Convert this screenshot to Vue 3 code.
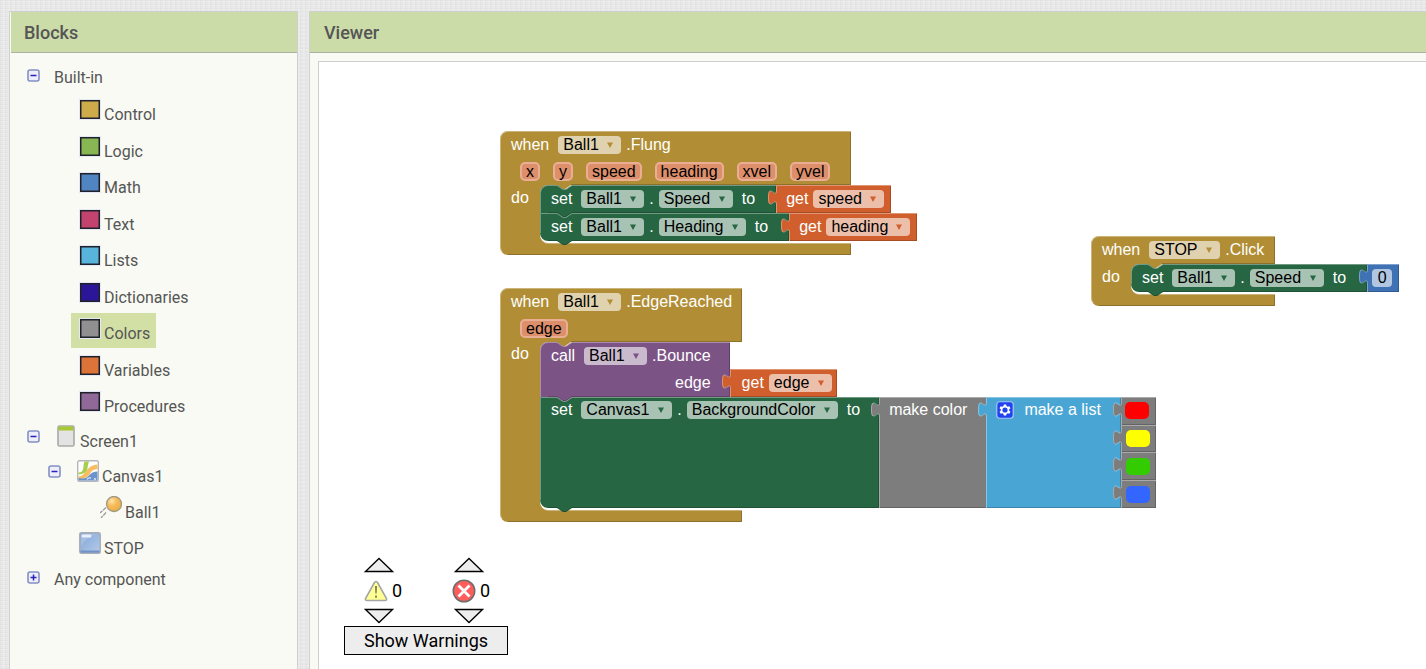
<script setup>
const BROWN = '#b18e35'
const GREEN = '#266643'
const ORANGE = '#d05f2d'
const PURPLE = '#7c5385'
const GRAY = '#7d7d7d'
const SKY = '#49a6d4'
const BLUE = '#3f71b5'

const drawers = [
  { name: 'Control', color: '#cdab4a' },
  { name: 'Logic', color: '#88b653' },
  { name: 'Math', color: '#5085c1' },
  { name: 'Text', color: '#c3436f' },
  { name: 'Lists', color: '#59b4dc' },
  { name: 'Dictionaries', color: '#2b1699' },
  { name: 'Colors', color: '#909090', selected: true },
  { name: 'Variables', color: '#dc743a' },
  { name: 'Procedures', color: '#906998' },
]

const NOTCH = 'l6,4 3,0 6,-4'
const NOTCH_BACK = 'l-6,4 -3,0 -6,-4'

/* Event block: a hat with a "do" mouth that is `inner` pixels tall. */
function hat(w, head, inner) {
  const mouth = head + inner
  const h = mouth + 12
  return {
    fill: BROWN,
    d: `M0,8 A8,8 0 0 1 8,0 H${w} V${head} H71 ${NOTCH_BACK} H48 a8,8 0 0 0 -8,8 V${mouth - 8} a8,8 0 0 0 8,8 H${w} V${h} H8 a8,8 0 0 1 -8,-8 Z`,
    light: `M2.5,${h - 3} Q.5,${h - 5} .5,${h - 8} V8 A7.5,7.5 0 0 1 8,.5 H${w} M42,${mouth - 3} Q44,${mouth + 0.5} 48,${mouth + 0.5} H${w}`,
    dark: `M8,${h - 0.5} H${w - 0.5} V${mouth + 1} M${w - 0.5},1 V${head - 0.5} H71`,
  }
}

/* Statement block with notches above and below. */
function statement(fill, x, y, w, h, first, last) {
  const start = first ? `M${x},${y + 8} a8,8 0 0 1 8,-8` : `M${x},${y}`
  const end = last ? `H${x + 8} a8,8 0 0 1 -8,-8` : `H${x}`
  const lightStart = first ? `V${y + 8} a7.5,7.5 0 0 1 7.5,-7.5` : `V${y + 0.5}`
  return {
    fill,
    d: `${start} H${x + 17} ${NOTCH} H${x + w} V${y + h} H${x + 32} ${NOTCH_BACK} ${end} Z`,
    light: `M${x + 0.5},${y + h - (last ? 8 : 0)} ${lightStart} H${x + 17} ${NOTCH} H${x + w}`,
    dark: `M${x + 8},${y + h - 0.5} H${x + 17} ${NOTCH} H${x + w - 0.5} V${y + 1}`,
  }
}

/* Value block with a puzzle tab on its left side. */
function value(fill, x, y, w, h) {
  const tab = `V${y + 20} c0,-10 -8,8 -8,-7.5 s8,2.5 8,-7.5`
  return {
    fill,
    d: `M${x},${y} H${x + w} V${y + h} H${x} ${tab} Z`,
    light: `M${x + 0.5},${y + h} ${tab} V${y + 0.5} H${x + w}`,
    dark: `M${x + 1},${y + h - 0.5} H${x + w - 0.5} V${y + 1}`,
  }
}

const say = (text, cls = '') => ({ kind: 'text', text, cls })
const pick = (text, color, label) => ({ kind: 'select', text, color, label })
const param = (text) => ({ kind: 'param', text })
const swatch = (color, label, cls = '') => ({ kind: 'swatch', color, label, cls })

const stacks = [
  {
    name: 'flung', width: 420, height: 126,
    shapes: [
      hat(351, 54, 58),
      statement(GREEN, 40, 82, 249, 28, false, true),
      statement(GREEN, 40, 54, 236, 28, true, false),
      value(ORANGE, 276, 54, 115, 28),
      value(ORANGE, 289, 82, 128, 28),
    ],
    rows: [
      { cls: 'hat', items: [say('when'), pick('Ball1', BROWN, 'Component'), say('.Flung', 'dotted')] },
      { cls: 'params', items: ['x', 'y', 'speed', 'heading', 'xvel', 'yvel'].map(param) },
      {
        cls: 'doing',
        items: [say('do', 'do'), say('set'), pick('Ball1', GREEN, 'Component'), say('.', 'dot'), pick('Speed', GREEN, 'Property'), say('to'), say('get', 'plug get'), pick('speed', ORANGE, 'Variable')],
      },
      {
        cls: 'next',
        items: [say('set'), pick('Ball1', GREEN, 'Component'), say('.', 'dot'), pick('Heading', GREEN, 'Property'), say('to'), say('get', 'plug get'), pick('heading', ORANGE, 'Variable')],
      },
    ],
  },
  {
    name: 'edge', width: 660, height: 236,
    shapes: [
      hat(242, 54, 168),
      statement(GREEN, 40, 109, 339, 111, false, true),
      statement(PURPLE, 40, 54, 190, 55, true, false),
      value(ORANGE, 230, 81, 107, 28),
      value(GRAY, 379, 109, 108, 111),
      value(SKY, 486, 109, 135, 111),
      value(GRAY, 621, 109, 35, 28),
      value(GRAY, 621, 137, 35, 27),
      value(GRAY, 621, 164, 35, 28),
      value(GRAY, 621, 192, 35, 28),
    ],
    rows: [
      { cls: 'hat', items: [say('when'), pick('Ball1', BROWN, 'Component'), say('.EdgeReached', 'dotted')] },
      { cls: 'params', items: [param('edge')] },
      { cls: 'doing short', items: [say('do', 'do'), say('call'), pick('Ball1', PURPLE, 'Component'), say('.Bounce', 'dotted')] },
      { cls: 'argument', items: [say('edge'), say('get', 'plug get'), pick('edge', ORANGE, 'Variable')] },
      {
        cls: 'next short',
        items: [say('set'), pick('Canvas1', GREEN, 'Component'), say('.', 'dot'), pick('BackgroundColor', GREEN, 'Property'), say('to'), say('make color', 'plug maker'), { kind: 'gear' }, say('make a list'), swatch('#ff0000', 'Red', 'inline')],
      },
      { cls: 'colors', items: [swatch('#ffff00', 'Yellow')] },
      { cls: 'colors', items: [swatch('#33cc00', 'Green')] },
      { cls: 'colors', items: [swatch('#3366ff', 'Blue')] },
    ],
  },
  {
    name: 'stop', width: 312, height: 72,
    shapes: [
      hat(184, 28, 30),
      statement(GREEN, 40, 28, 236, 28, true, true),
      value(BLUE, 276, 28, 32, 28),
    ],
    rows: [
      { cls: 'hat', items: [say('when'), pick('STOP', BROWN, 'Component'), say('.Click', 'dotted')] },
      {
        cls: 'doing',
        items: [say('do', 'do'), say('set'), pick('Ball1', GREEN, 'Component'), say('.', 'dot'), pick('Speed', GREEN, 'Property'), say('to'), { kind: 'number', text: '0' }],
      },
    ],
  },
]
</script>

<template>
  <div class="page">
    <aside class="panel blocks">
      <h2 class="panel-title">Blocks</h2>
      <div class="tree">
        <div class="root-row first">
          <button class="toggle" aria-label="Collapse Built-in">
            <svg width="13" height="13" viewBox="0 0 13 13"><rect x="1" y="1" width="11" height="11" rx="2" fill="#eeeefb" stroke="#8490c4" stroke-width="1.6" /><path d="M3.5 6.5h6" stroke="#2a20c0" stroke-width="1.5" /></svg>
          </button>
          <span>Built-in</span>
        </div>
        <ul class="drawers">
          <li v-for="d in drawers" :key="d.name">
            <button class="drawer" :class="{ selected: d.selected }">
              <svg width="22" height="21" viewBox="0 0 22 21"><rect width="22" height="21" fill="#e3e8f4" /><rect x="1.75" y="1.75" width="18.5" height="17.5" :fill="d.color" stroke="#20222a" stroke-width="1.5" /></svg>
              <span>{{ d.name }}</span>
            </button>
          </li>
        </ul>
        <div class="node screen">
          <button class="toggle" aria-label="Collapse Screen1">
            <svg width="13" height="13" viewBox="0 0 13 13"><rect x="1" y="1" width="11" height="11" rx="2" fill="#eeeefb" stroke="#8490c4" stroke-width="1.6" /><path d="M3.5 6.5h6" stroke="#2a20c0" stroke-width="1.5" /></svg>
          </button>
          <svg class="icon" width="18" height="22" viewBox="0 0 18 22"><rect x="1" y="1" width="16" height="20" rx="1.5" fill="#e3e3e3" stroke="#a9a9a7" stroke-width="1.6" /><path d="M1.8 1.5h14.4v4H1.8z" fill="#a6c832" /></svg>
          <span>Screen1</span>
        </div>
        <div class="node canvas">
          <button class="toggle" aria-label="Collapse Canvas1">
            <svg width="13" height="13" viewBox="0 0 13 13"><rect x="1" y="1" width="11" height="11" rx="2" fill="#eeeefb" stroke="#8490c4" stroke-width="1.6" /><path d="M3.5 6.5h6" stroke="#2a20c0" stroke-width="1.5" /></svg>
          </button>
          <svg class="icon" width="22" height="22" viewBox="0 0 22 22">
            <rect x=".7" y=".7" width="20.6" height="20.6" rx="1.5" fill="#fff" stroke="#b5b7ba" stroke-width="1.4" />
            <path d="M1.500 12.500C8 12.500 5.500 6 7.500 1.500H12C9.500 8 12 11.500 6 13.500Q4 14.500 1.500 14.500z" fill="#a5cf4c" />
            <path d="M1.500 16.500C9 16.500 9 5 20.500 4.500V9C13 9.500 14 14.500 10 17Q6 19.500 1.500 19.500z" fill="#f6bd62" />
            <path d="M1.500 20.500V18Q9 19.500 12 15.500T20.500 11.500V20.500z" fill="#6d93cb" />
            <path d="M10 19.500q1-2 4-1.500M17 18.500l2 1" fill="none" stroke="#dbe6f5" stroke-width="1.400" />
          </svg>
          <span>Canvas1</span>
        </div>
        <div class="node ball">
          <svg class="icon" width="22" height="22" viewBox="0 0 22 22">
            <defs><radialGradient id="ballFill" cx=".35" cy=".3" r=".8"><stop offset="0" stop-color="#ffe7b0" /><stop offset=".4" stop-color="#f6bd5c" /><stop offset="1" stop-color="#eda93c" /></radialGradient></defs>
            <circle cx="14" cy="8" r="7.500" fill="url(#ballFill)" stroke="#a39a85" stroke-width="1.300" />
            <path d="M6 11.500L0 17M6 16.500L1 22" stroke="#9c9c98" stroke-width="1.300" stroke-dasharray="4 .8" />
          </svg>
          <span>Ball1</span>
        </div>
        <div class="node stop">
          <svg class="icon" width="22" height="22" viewBox="0 0 22 22">
            <defs><linearGradient id="buttonFill" x2="1" y2="1"><stop offset="0" stop-color="#7fa3d6" /><stop offset="1" stop-color="#b6cdea" /></linearGradient></defs>
            <rect x=".8" y=".8" width="20.400" height="20.400" rx="1.500" fill="url(#buttonFill)" stroke="#a9adb5" stroke-width="1.500" />
            <path d="M1.500 18.500h19v2.200h-19z" fill="#7291c6" />
            <path d="M2 2h16Q8 5 2 14z" fill="#a3bee3" />
            <rect x="2.500" y="2.500" width="10" height="3" rx="1.500" fill="#e8f0fb" />
          </svg>
          <span>STOP</span>
        </div>
        <div class="root-row">
          <button class="toggle" aria-label="Expand Any component">
            <svg width="13" height="13" viewBox="0 0 13 13"><rect x="1" y="1" width="11" height="11" rx="2" fill="#eeeefb" stroke="#8490c4" stroke-width="1.6" /><path d="M3.500 6.500h6M6.500 3.500v6" stroke="#2a20c0" stroke-width="1.500" /></svg>
          </button>
          <span>Any component</span>
        </div>
      </div>
    </aside>

    <main class="panel viewer">
      <h2 class="panel-title">Viewer</h2>
      <div class="workspace">
        <section v-for="s in stacks" :key="s.name" class="stack" :class="s.name">
          <svg class="shapes" :width="s.width" :height="s.height">
            <g v-for="(shape, i) in s.shapes" :key="i">
              <path :d="shape.d" :fill="shape.fill" />
              <path :d="shape.dark" fill="none" stroke="#000" stroke-opacity=".2" />
              <path :d="shape.light" fill="none" stroke="#fff" stroke-opacity=".34" />
            </g>
          </svg>
          <div v-for="(row, r) in s.rows" :key="r" class="row" :class="row.cls">
            <template v-for="(item, i) in row.items" :key="i">
              <span v-if="item.kind === 'text'" :class="item.cls">{{ item.text }}</span>
              <span v-else-if="item.kind === 'param'" class="param">{{ item.text }}</span>
              <span v-else-if="item.kind === 'select'" class="field">
                <select :aria-label="item.label"><option>{{ item.text }}</option></select>
                <svg width="6" height="6" viewBox="0 0 6 6"><path d="M0 .5h6L3 6z" :fill="item.color" /></svg>
              </span>
              <input v-else-if="item.kind === 'number'" class="number" :value="item.text" aria-label="Number" />
              <button v-else-if="item.kind === 'gear'" class="gear" aria-label="Edit list items">
                <svg width="18" height="18" viewBox="0 0 18 18">
                  <rect x=".75" y=".75" width="16.500" height="16.500" rx="3" fill="#1f43ee" stroke="#a9c6f3" stroke-width="1.200" />
                  <path d="M7.800 3.500h2.400l.3 1.600 1.200.7 1.600-.6 1.200 2.100-1.300 1v1.400l1.300 1-1.200 2.100-1.600-.6-1.200.7-.3 1.600H7.800l-.3-1.600-1.200-.7-1.600.6-1.200-2.100 1.300-1V8.300l-1.300-1 1.200-2.100 1.600.6 1.200-.7z" fill="#fff" />
                  <circle cx="9" cy="9" r="2.600" fill="#1f43ee" />
                </svg>
              </button>
              <button v-else class="swatch" :class="item.cls" :aria-label="item.label" :style="{ background: item.color }"></button>
            </template>
          </div>
        </section>

        <div class="warnings">
          <div class="counters">
            <div class="counter">
              <button class="step" aria-label="Previous warning"><svg width="30" height="16" viewBox="0 0 30 16"><path d="M1.500 14.500L15 1.500 28.500 14.500z" fill="#ededed" stroke="#000" stroke-width="1.300" /></svg></button>
              <div class="count">
                <svg width="24" height="22" viewBox="0 0 24 22"><path d="M12 1.500Q13 1.500 13.800 3L22.500 18.500Q23 20.500 21 20.500H3Q1 20.500 1.500 18.500L10.200 3Q11 1.500 12 1.500z" fill="#ffff94" stroke="#a5a5a5" stroke-width="1.600" /><path d="M10.900 6h2.200l-.4 7.500h-1.400zM11 15.500h2v2.200h-2z" fill="#85855f" /></svg>
                <span>0</span>
              </div>
              <button class="step" aria-label="Next warning"><svg width="30" height="16" viewBox="0 0 30 16"><path d="M1.500 1.500L15 14.500 28.500 1.500z" fill="#ededed" stroke="#000" stroke-width="1.300" /></svg></button>
            </div>
            <div class="counter errors">
              <button class="step" aria-label="Previous error"><svg width="30" height="16" viewBox="0 0 30 16"><path d="M1.500 14.500L15 1.500 28.500 14.500z" fill="#ededed" stroke="#000" stroke-width="1.300" /></svg></button>
              <div class="count">
                <svg width="24" height="24" viewBox="0 0 24 24"><circle cx="12" cy="12" r="10.700" fill="#ff5c5c" stroke="#6e6e6e" stroke-width="1.600" /><path d="M6.500 6.500l11 11M17.500 6.500l-11 11" stroke="#fff" stroke-width="2.800" /></svg>
                <span>0</span>
              </div>
              <button class="step" aria-label="Next error"><svg width="30" height="16" viewBox="0 0 30 16"><path d="M1.500 1.500L15 14.500 28.500 1.500z" fill="#ededed" stroke="#000" stroke-width="1.300" /></svg></button>
            </div>
          </div>
          <button class="show">Show Warnings</button>
        </div>
      </div>
    </main>
  </div>
</template>

<style>
body {
  overflow: hidden;
}
</style>

<style scoped>
* {
  box-sizing: border-box;
}
button {
  margin: 0;
  padding: 0;
  border: 0;
  background: none;
  color: inherit;
  font: inherit;
}
svg {
  display: block;
  flex: none;
}
.page {
  display: flex;
  gap: 11px;
  height: 100vh;
  padding: 11px 0 0 9px;
  overflow: hidden;
  font-family: Roboto, "Liberation Sans", sans-serif;
  font-size: 16px;
  color: #555;
  background-color: #e7e7e7;
  background-image:
    repeating-linear-gradient(0deg, rgba(0, 0, 0, 0.015) 0 1px, transparent 1px 3px, rgba(255, 255, 255, 0.15) 3px 4px),
    repeating-linear-gradient(90deg, rgba(0, 0, 0, 0.015) 0 1px, transparent 1px 3px, rgba(255, 255, 255, 0.15) 3px 5px);
}
.panel {
  display: flex;
  flex-direction: column;
  border: 1px solid #cfcfcf;
  border-bottom: 0;
  background: #f9faf3;
}
.blocks {
  flex: 0 0 289px;
  padding-left: 1px;
}
.viewer {
  flex: 1;
  min-width: 0;
  border-right: 0;
}
.panel-title {
  margin: 0;
  padding: 2px 13px 0;
  border-bottom: 1px solid #adb0a4;
  background: #ccdca9;
  font-size: 18px;
  font-weight: 500;
  line-height: 38px;
}
.viewer .panel-title {
  padding-left: 14px;
}
.tree {
  padding: 9px 0 0 16px;
  line-height: 20px;
}
.root-row {
  display: flex;
  gap: 14px;
  height: 34px;
  padding-top: 6px;
}
.root-row.first {
  height: 32px;
}
.root-row .toggle {
  margin-top: 1px;
}
.toggle {
  align-self: flex-start;
}
.drawers {
  display: flex;
  flex-direction: column;
  justify-content: space-between;
  min-height: 327px;
  margin: 0;
  padding: 0 0 0 44px;
  list-style: none;
}
.drawer {
  display: flex;
  align-items: baseline;
  gap: 3px;
  height: 35px;
  padding: 5px 6px 0 8px;
}
.drawer.selected {
  background: #d3e0a5;
}
.node {
  display: flex;
  align-items: baseline;
  height: 36px;
  padding-top: 4px;
}
.node .toggle {
  margin-top: 5px;
}
.icon {
  margin-right: 3px;
}
.screen {
  height: 35px;
}
.screen .icon {
  margin-left: 17px;
  margin-right: 5px;
}
.canvas {
  padding-left: 21px;
}
.canvas .icon {
  margin-left: 16px;
}
.ball {
  padding-left: 73px;
}
.stop.node {
  padding-left: 52px;
}
.workspace {
  position: relative;
  flex: 1;
  margin: 8px 0 0 8px;
  border: 1px solid #cfcfcf;
  border-width: 1px 0 0 1px;
  background: #fff;
}
.stack {
  position: absolute;
  font-family: "Liberation Sans", Arial, sans-serif;
  color: #fff;
}
.stack.flung {
  left: 181px;
  top: 69px;
}
.stack.edge {
  left: 181px;
  top: 226px;
}
.stack.stop {
  left: 772px;
  top: 174px;
}
.shapes {
  position: absolute;
  left: 0;
  top: 0;
}
.row {
  position: relative;
  display: flex;
  align-items: center;
  height: 28px;
  line-height: 18px;
  white-space: pre;
}
.row.short {
  height: 27px;
}
.row.hat,
.row.doing {
  padding-left: 11px;
}
.row.params {
  gap: 13px;
  height: 26px;
  padding: 0 0 2px 20px;
}
.row.next {
  padding-left: 51px;
}
.row.next.short {
  padding-bottom: 1px;
}
.row.argument {
  padding-left: 175px;
}
.row.colors {
  padding-left: 626px;
}
.do {
  width: 40px;
  padding-bottom: 3px;
}
.dotted {
  margin-left: -4px;
}
.dot {
  margin: 0 -4px;
}
.plug {
  margin-left: 31px;
}
.plug.maker {
  margin-left: 29px;
}
.get {
  margin-right: -4px;
}
.field {
  position: relative;
  margin: 0 9px;
}
.plug + .field {
  margin-right: 0;
}
.field select {
  display: block;
  appearance: none;
  height: 18px;
  margin: 0;
  padding: 0 22px 0 5px;
  border: 0;
  border-radius: 4px;
  background: rgba(255, 255, 255, 0.6);
  color: #000;
  font: inherit;
  line-height: 18px;
}
.field svg {
  position: absolute;
  right: 8px;
  top: 6px;
  pointer-events: none;
}
.param {
  padding: 0 4px;
  border: 2px solid #eaae94;
  border-radius: 5px;
  background: #dd8f6c;
  color: #000;
  line-height: 15px;
}
.number {
  width: 20px;
  height: 18px;
  margin-left: 26px;
  padding: 0;
  border: 0;
  border-radius: 4px;
  background: #b2c6e1;
  color: #000;
  font: inherit;
  text-align: center;
}
.gear {
  margin: 0 10px 0 29px;
}
.swatch {
  width: 24px;
  height: 17px;
  border-radius: 5px;
}
.swatch.inline {
  margin-left: 24px;
}
.warnings {
  position: absolute;
  left: 25px;
  bottom: 14px;
  color: #000;
  font-size: 18px;
}
.counters {
  display: flex;
  gap: 50px;
  padding-left: 20px;
}
.counter {
  width: 38px;
}
.errors .step {
  margin-left: 2px;
}
.step {
  display: block;
}
.count {
  display: flex;
  align-items: center;
  gap: 4px;
  height: 35px;
}
.show {
  display: block;
  margin-top: 2px;
  padding: 1px 19px;
  border: 1px solid #000;
  background: #ededed;
  line-height: 25px;
}
</style>
